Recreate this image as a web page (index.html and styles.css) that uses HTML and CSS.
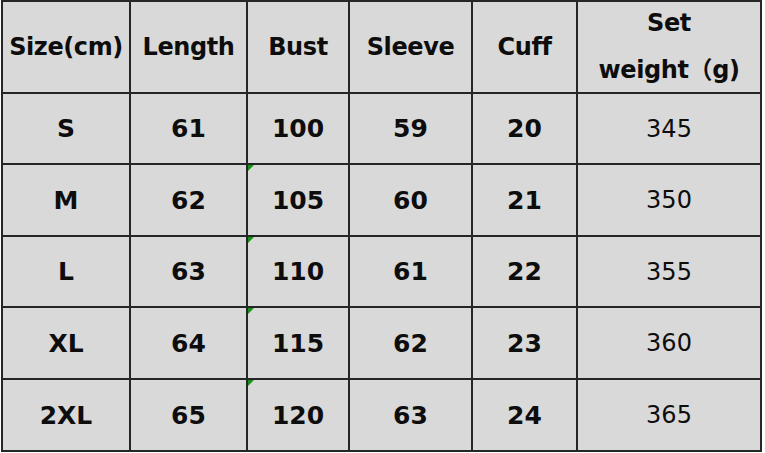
FILE: index.html
```html
<!DOCTYPE html>
<html lang="en">
<head>
<meta charset="utf-8">
<title>Size chart</title>
<link rel="stylesheet" href="styles.css">
</head>
<body>
<div class="chart">
  <div class="cell head">Size(cm)</div>
  <div class="cell head">Length</div>
  <div class="cell head">Bust</div>
  <div class="cell head">Sleeve</div>
  <div class="cell head">Cuff</div>
  <div class="cell head wrap">Set<br>weight（g)</div>

  <div class="cell">S</div>
  <div class="cell">61</div>
  <div class="cell">100</div>
  <div class="cell">59</div>
  <div class="cell">20</div>
  <div class="cell light">345</div>

  <div class="cell">M</div>
  <div class="cell">62</div>
  <div class="cell flag">105</div>
  <div class="cell">60</div>
  <div class="cell">21</div>
  <div class="cell light">350</div>

  <div class="cell">L</div>
  <div class="cell">63</div>
  <div class="cell flag">110</div>
  <div class="cell">61</div>
  <div class="cell">22</div>
  <div class="cell light">355</div>

  <div class="cell">XL</div>
  <div class="cell">64</div>
  <div class="cell flag">115</div>
  <div class="cell">62</div>
  <div class="cell">23</div>
  <div class="cell light">360</div>

  <div class="cell">2XL</div>
  <div class="cell">65</div>
  <div class="cell flag">120</div>
  <div class="cell">63</div>
  <div class="cell">24</div>
  <div class="cell light">365</div>
</div>
</body>
</html>
```
FILE: styles.css
```css
html, body {
  margin: 0;
  padding: 0;
  background: #ffffff;
}

body {
  font-family: "DejaVu Sans", "Noto Sans CJK SC", sans-serif;
  color: #0d0d0d;
}

.chart {
  display: grid;
  grid-template-columns: 126px 115px 100px 121px 103px 182px;
  grid-template-rows: 90px 69px 70px 69px 70px 70px;
  gap: 2px;
  padding: 2px;
  margin-left: 1px;
  width: max-content;
  background: #262626;
}

.cell {
  position: relative;
  display: flex;
  align-items: center;
  justify-content: center;
  text-align: center;
  background: #d9d9d9;
  font-size: 25px;
  font-weight: bold;
  line-height: 1;
}

.head {
  font-size: 24px;
  letter-spacing: -0.4px;
}

.wrap {
  line-height: 47px;
}

.light {
  font-size: 24px;
  font-weight: normal;
}

.flag::before {
  content: "";
  position: absolute;
  top: 0;
  left: 0;
  border-top: 6px solid #139413;
  border-right: 6px solid transparent;
}
```
